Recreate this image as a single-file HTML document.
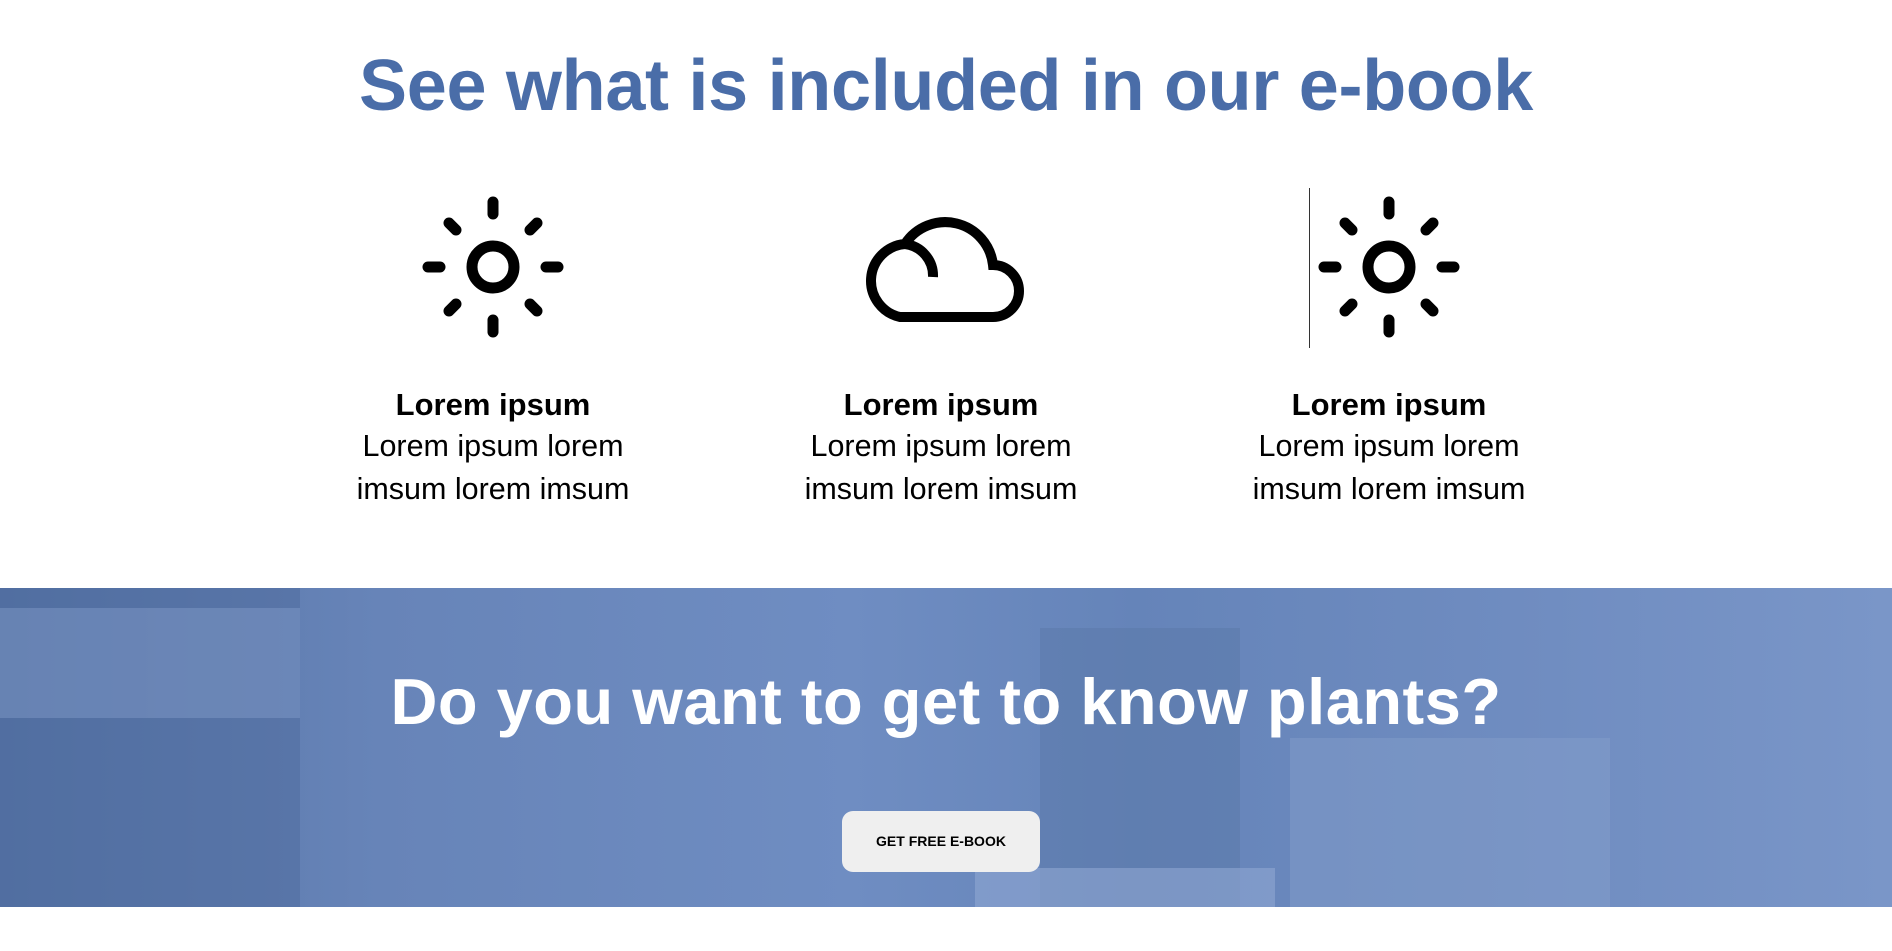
<!DOCTYPE html>
<html><head><meta charset="utf-8"><style>
html,body{margin:0;padding:0;width:1892px;height:951px;background:#fff;overflow:hidden;font-family:"Liberation Sans",sans-serif;}
h1{position:absolute;left:0;width:1892px;top:45px;margin:0;text-align:center;color:#4a6da8;font-size:72px;font-weight:bold;letter-spacing:-0.3px;}
.col{position:absolute;top:385px;width:440px;text-align:center;color:#000;}
.col b{display:block;font-size:31px;line-height:40px;}
.col p{margin:0;font-size:30.5px;line-height:43px;}
svg.ic{position:absolute;}
.banner{position:absolute;left:0;top:588px;width:1892px;height:319px;background:linear-gradient(90deg,#5473a6 0%,#6784b8 20%,#6f8dc2 45%,#6584b9 60%,#6f8cc0 80%,#7a96c8 100%);overflow:hidden;}
.banner h2{position:absolute;left:0;width:1892px;top:76px;margin:0;text-align:center;color:#fff;font-size:65px;font-weight:bold;letter-spacing:0.5px;}
.btn{position:absolute;left:842px;top:223px;width:198px;height:61px;background:#efefef;border-radius:11px;font-size:14px;font-weight:bold;line-height:61px;text-align:center;color:#000;}
</style></head><body>
<h1>See what is included in our e-book</h1>

<svg class="ic" style="left:420px;top:194px" width="146" height="146" viewBox="0 0 146 146" fill="none" stroke="#000" stroke-width="11" stroke-linecap="round">
<circle cx="73" cy="73" r="21"/>
<line x1="73" y1="8" x2="73" y2="20"/><line x1="73" y1="126" x2="73" y2="138"/>
<line x1="8" y1="73" x2="20" y2="73"/><line x1="126" y1="73" x2="138" y2="73"/>
<line x1="29" y1="29" x2="36" y2="36"/><line x1="110" y1="110" x2="117" y2="117"/>
<line x1="117" y1="29" x2="110" y2="36"/><line x1="36" y1="110" x2="29" y2="117"/>
</svg>

<svg class="ic" style="left:860px;top:212px" width="164" height="114" viewBox="0 0 164 114" fill="none" stroke="#000" stroke-width="10">
<path d="M40 105 H133 A26 26 0 0 0 133 53 A48 48 0 0 0 45 32 A37 37 0 0 0 40 105 Z"/>
<path d="M45 32 A32 32 0 0 1 73 65"/>
</svg>

<div style="position:absolute;left:1309px;top:188px;width:1px;height:160px;background:#333"></div>
<svg class="ic" style="left:1316px;top:194px" width="146" height="146" viewBox="0 0 146 146" fill="none" stroke="#000" stroke-width="11" stroke-linecap="round">
<circle cx="73" cy="73" r="21"/>
<line x1="73" y1="8" x2="73" y2="20"/><line x1="73" y1="126" x2="73" y2="138"/>
<line x1="8" y1="73" x2="20" y2="73"/><line x1="126" y1="73" x2="138" y2="73"/>
<line x1="29" y1="29" x2="36" y2="36"/><line x1="110" y1="110" x2="117" y2="117"/>
<line x1="117" y1="29" x2="110" y2="36"/><line x1="36" y1="110" x2="29" y2="117"/>
</svg>

<div class="col" style="left:273px"><b>Lorem ipsum</b><p>Lorem ipsum lorem<br>imsum lorem imsum</p></div>
<div class="col" style="left:721px"><b>Lorem ipsum</b><p>Lorem ipsum lorem<br>imsum lorem imsum</p></div>
<div class="col" style="left:1169px"><b>Lorem ipsum</b><p>Lorem ipsum lorem<br>imsum lorem imsum</p></div>

<div class="banner">
<div style="position:absolute;left:0;top:0;width:300px;height:319px;background:#4d6a9c;opacity:.5"></div>
<div style="position:absolute;left:0;top:20px;width:300px;height:110px;background:#8aa3cf;opacity:.4"></div>
<div style="position:absolute;left:1040px;top:40px;width:200px;height:279px;background:#5a77a8;opacity:.5"></div>
<div style="position:absolute;left:1290px;top:150px;width:320px;height:169px;background:#8aa2cc;opacity:.4"></div>
<div style="position:absolute;left:975px;top:280px;width:300px;height:39px;background:#8fa7d2;opacity:.6"></div>
<h2>Do you want to get to know plants?</h2>
<div class="btn">GET FREE E-BOOK</div>
</div>
</body></html>
